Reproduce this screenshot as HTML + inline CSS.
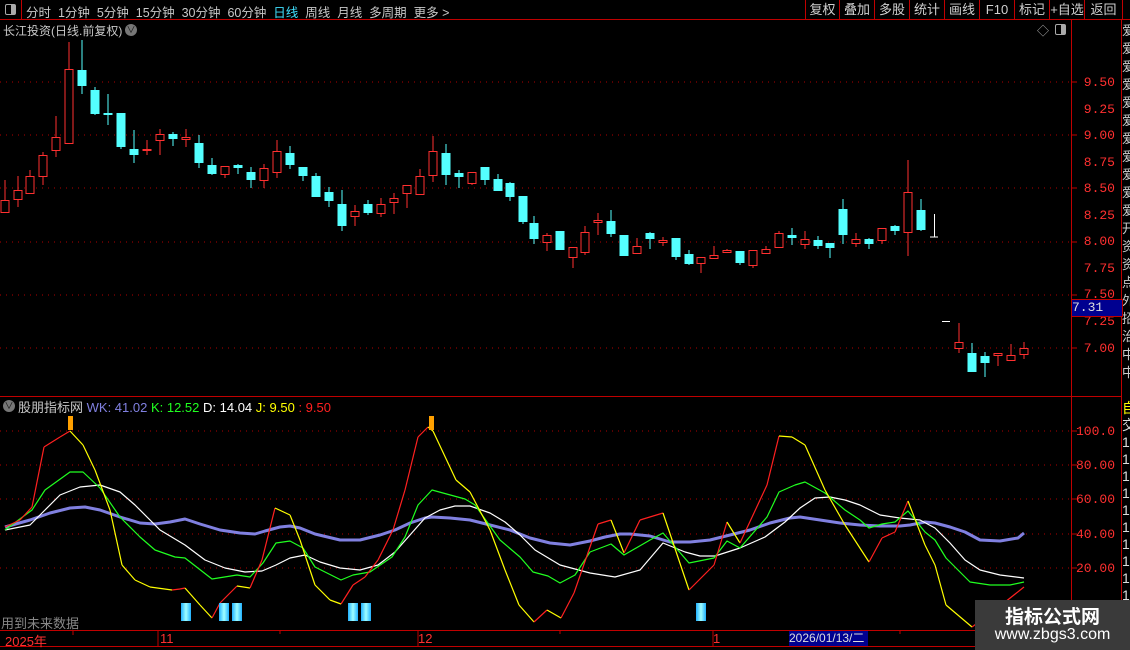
<!DOCTYPE html>
<html><head><meta charset="utf-8"><style>
body{margin:0;background:#000;width:1130px;height:650px;overflow:hidden;position:relative;font-family:"Liberation Sans","Noto Sans CJK SC",sans-serif;}
.a{position:absolute;white-space:nowrap;}
.tb{font-size:12.5px;color:#c8c8c8;top:2px;}
.btn{position:absolute;top:0;height:19px;border-left:1px solid #c00000;color:#d0d0d0;font-size:13px;line-height:19px;text-align:center;}
.pl{position:absolute;right:15px;font-size:13px;color:#ff3030;font-family:"Liberation Mono",monospace;}
</style></head><body>
<div class="a" style="left:0;top:0;width:21px;height:19px;border-right:1px solid #c00000;"></div>
<div class="a" style="left:5px;top:4px;width:9px;height:9px;border:1px solid #aaa;border-radius:2px;"><div style="position:absolute;right:0;top:0;width:4px;height:9px;background:#aaa"></div></div>
<div class="a" style="left:0;top:19px;width:1130px;height:1px;background:#c00000"></div>
<div class="a tb" style="left:26px">分时&nbsp;&nbsp;1分钟&nbsp;&nbsp;5分钟&nbsp;&nbsp;15分钟&nbsp;&nbsp;30分钟&nbsp;&nbsp;60分钟&nbsp;&nbsp;<span style="color:#40e0ff">日线</span>&nbsp;&nbsp;周线&nbsp;&nbsp;月线&nbsp;&nbsp;多周期&nbsp;&nbsp;更多 &gt;</div>
<div class="btn" style="left:805px;width:33px">复权</div>
<div class="btn" style="left:839px;width:34px">叠加</div>
<div class="btn" style="left:874px;width:34px">多股</div>
<div class="btn" style="left:909px;width:34px">统计</div>
<div class="btn" style="left:944px;width:34px">画线</div>
<div class="btn" style="left:979px;width:34px">F10</div>
<div class="btn" style="left:1014px;width:34px">标记</div>
<div class="btn" style="left:1049px;width:34px">+自选</div>
<div class="btn" style="left:1084px;width:37px;border-right:1px solid #c00000">返回</div>
<div class="a" style="left:3px;top:22px;font-size:12px;color:#c8c8c8">长江投资(日线.前复权)</div>
<div class="a" style="left:125px;top:24px;width:12px;height:12px;border-radius:6px;background:#777;color:#111;font-size:9px;line-height:12px;text-align:center">∨</div>
<div class="a" style="left:1037px;top:22px;font-size:12px;color:#aaa">◇</div>
<div class="a" style="left:1055px;top:24px;width:9px;height:9px;border:1px solid #aaa;border-radius:2px;"><div style="position:absolute;right:0;top:0;width:4px;height:9px;background:#aaa"></div></div>
<div class="a" style="left:1071px;top:20px;width:1px;height:630px;background:#c00000"></div>
<div class="a" style="left:1121px;top:20px;width:1px;height:630px;background:#c00000"></div>
<div class="a" style="left:0;top:396px;width:1122px;height:1px;background:#c00000"></div>
<div class="a" style="left:0;top:630px;width:1130px;height:1px;background:#c00000"></div>
<div class="a" style="left:0;top:646px;width:1130px;height:1px;background:#c00000"></div>
<div class="a" style="left:1122px;top:22px;width:8px;height:370px;overflow:hidden;color:#ccc;font-size:13px;line-height:18px;">爱<br>爱<br>爱<br>爱<br>爱<br>爱<br>爱<br>爱<br>爱<br>爱<br>爱<br>开<br>资<br>资<br>点<br>外<br>招<br>治<br>中<br>中</div>
<div class="a" style="left:1122px;top:400px;width:8px;height:220px;overflow:hidden;color:#ddd;font-size:14px;line-height:17px;"><span style="color:#ff0">自</span><br>交<br>1<br>1<br>1<br>1<br>1<br>1<br>1<br>1<br>1<br>1<br>1</div>
<div class="pl" style="top:75px">9.50</div>
<div class="pl" style="top:102px">9.25</div>
<div class="pl" style="top:128px">9.00</div>
<div class="pl" style="top:155px">8.75</div>
<div class="pl" style="top:181px">8.50</div>
<div class="pl" style="top:208px">8.25</div>
<div class="pl" style="top:234px">8.00</div>
<div class="pl" style="top:261px">7.75</div>
<div class="pl" style="top:287px">7.50</div>
<div class="pl" style="top:314px">7.25</div>
<div class="pl" style="top:341px">7.00</div>
<div class="a" style="left:1071px;top:299px;width:50px;height:16px;background:#000090;border:1px solid #c00000;color:#ddd;font-size:13px;line-height:16px;font-family:'Liberation Mono',monospace;">7.31</div>
<div class="pl" style="top:424px">100.0</div>
<div class="pl" style="top:458px">80.00</div>
<div class="pl" style="top:492px">60.00</div>
<div class="pl" style="top:527px">40.00</div>
<div class="pl" style="top:561px">20.00</div>
<div class="a" style="left:3px;top:400px;width:12px;height:12px;border-radius:6px;background:#777;color:#111;font-size:9px;line-height:12px;text-align:center">∨</div>
<div class="a" style="left:18px;top:397px;font-size:13px;color:#c8c8c8">股朋指标网 <span style="color:#8080e0">WK: 41.02</span> <span style="color:#20ff20">K: 12.52</span> <span style="color:#fff">D: 14.04</span> <span style="color:#ffff00">J: 9.50</span> <span style="color:#ff2020">: 9.50</span></div>
<div class="a" style="left:1px;top:613px;font-size:13px;color:#888">用到未来数据</div>
<div class="a" style="left:5px;top:631px;font-size:13px;color:#ff3030">2025年</div>
<div class="a" style="left:160px;top:631px;font-size:13px;color:#ff3030">11</div>
<div class="a" style="left:418px;top:631px;font-size:13px;color:#ff3030">12</div>
<div class="a" style="left:713px;top:631px;font-size:13px;color:#ff3030">1</div>
<div class="a" style="left:789px;top:631px;width:79px;height:15px;background:#000090;color:#ddd;font-size:12px;line-height:15px">2026/01/13/二</div>
<svg class="a" style="left:0;top:0" width="1130" height="650">
<g stroke="#b00000" stroke-dasharray="1 5">
<line x1="0" y1="82" x2="1071" y2="82"/><line x1="0" y1="135" x2="1071" y2="135"/><line x1="0" y1="188" x2="1071" y2="188"/><line x1="0" y1="242" x2="1071" y2="242"/><line x1="0" y1="295" x2="1071" y2="295"/><line x1="0" y1="348" x2="1071" y2="348"/>
<line x1="0" y1="431" x2="1071" y2="431"/><line x1="0" y1="465" x2="1071" y2="465"/><line x1="0" y1="499" x2="1071" y2="499"/><line x1="0" y1="534" x2="1071" y2="534"/><line x1="0" y1="568" x2="1071" y2="568"/>
</g>
<g stroke="#c00000">
<line x1="1071" y1="82" x2="1077" y2="82"/><line x1="1071" y1="135" x2="1077" y2="135"/><line x1="1071" y1="188" x2="1077" y2="188"/><line x1="1071" y1="242" x2="1077" y2="242"/><line x1="1071" y1="295" x2="1077" y2="295"/><line x1="1071" y1="348" x2="1077" y2="348"/>
<line x1="1071" y1="431" x2="1077" y2="431"/><line x1="1071" y1="465" x2="1077" y2="465"/><line x1="1071" y1="499" x2="1077" y2="499"/><line x1="1071" y1="534" x2="1077" y2="534"/><line x1="1071" y1="568" x2="1077" y2="568"/>
<line x1="73" y1="630" x2="73" y2="635"/><line x1="158" y1="630" x2="158" y2="646"/><line x1="418" y1="630" x2="418" y2="646"/><line x1="713" y1="630" x2="713" y2="646"/><line x1="280" y1="630" x2="280" y2="634"/><line x1="560" y1="630" x2="560" y2="634"/><line x1="900" y1="630" x2="900" y2="634"/>
</g>
<g id="cd"></g>
<g fill="none" stroke-width="1.2" stroke-linejoin="round">
<polyline stroke="#8080e0" stroke-width="3" points="5,527 30,520 50,513 70,508 85,507 100,510 120,517 140,523 155,524 170,522 185,519 200,524 220,530 240,533 255,534 265,531 280,527 290,526 300,528 315,534 340,540 360,540 380,535 395,530 410,523 425,518 432,517 450,518 470,520 490,525 510,530 530,538 550,543 570,545 590,541 605,537 620,534 630,534 650,536 670,542 690,542 710,540 730,535 750,530 770,523 790,518 800,517 820,520 840,523 860,525 880,526 900,526 910,525 925,522 935,523 950,527 965,532 980,540 1000,541 1018,538 1024,533"/>
<polyline stroke="#ffffff" points="5,530 30,525 45,510 60,495 80,487 100,485 120,492 135,505 160,530 185,545 205,560 225,568 245,572 262,571 276,565 290,558 305,555 320,562 340,568 360,570 378,565 395,552 410,535 425,518 440,510 455,506 470,506 490,513 505,522 520,535 535,550 560,565 590,573 615,577 640,570 663,543 685,552 700,556 715,556 740,548 765,537 785,522 800,508 815,498 830,497 845,500 860,505 880,515 900,518 920,520 935,528 950,543 965,560 980,570 1000,575 1024,578"/>
<polyline stroke="#20ff20" points="5,530 32,510 45,490 70,472 83,472 100,488 120,517 140,537 155,550 175,557 185,558 212,579 237,575 250,577 263,563 276,543 290,541 303,548 315,567 341,580 353,575 370,572 392,557 405,537 418,505 432,490 465,499 475,505 500,540 520,557 533,572 548,576 560,583 575,575 590,552 611,544 624,555 650,540 663,533 689,563 714,558 727,541 740,548 767,517 779,492 795,485 805,482 825,493 845,510 860,520 869,528 882,524 895,522 908,511 925,532 935,540 946,558 970,582 990,585 1010,585 1024,582"/>
</g>
<g id="jl" fill="none" stroke-width="1.2"></g>
<rect x="68" y="416" width="5" height="14" fill="#ffa000"/>
<rect x="429" y="416" width="5" height="14" fill="#ffa000"/>
<defs><linearGradient id="cg" x1="0" x2="1"><stop offset="0" stop-color="#20b0ff"/><stop offset="0.5" stop-color="#a0ffff"/><stop offset="1" stop-color="#20b0ff"/></linearGradient></defs>
<g fill="url(#cg)">
<rect x="181" y="603" width="10" height="18"/><rect x="219" y="603" width="10" height="18"/><rect x="232" y="603" width="10" height="18"/><rect x="348" y="603" width="10" height="18"/><rect x="361" y="603" width="10" height="18"/><rect x="696" y="603" width="10" height="18"/>
</g>
</svg>
<div class="a" style="left:975px;top:600px;width:155px;height:50px;background:#3a3a3a;"></div>
<div class="a" style="left:975px;top:602px;width:155px;text-align:center;font-size:19px;font-weight:bold;color:#fff">指标公式网</div>
<div class="a" style="left:975px;top:626px;width:155px;text-align:center;font-size:16px;color:#fff">www.zbgs3.com</div>
<script>
var d=[[5,180,200,213,213,'r'],[18,176,190,200,207,'r'],[30,170,176,194,194,'r'],[43,152,155,177,185,'r'],[56,116,137,151,157,'r'],[69,42,69,144,144,'r'],[82,40,70,86,94,'c'],[95,87,90,114,115,'c'],[108,94,113,115,125,'c'],[121,113,113,147,149,'c'],[134,130,149,155,163,'c'],[147,140,149,151,155,'rf'],[160,129,134,141,155,'r'],[173,132,134,139,146,'c'],[186,129,137,140,147,'r'],[199,135,143,163,168,'c'],[212,158,165,174,175,'c'],[225,166,166,175,178,'r'],[238,164,165,168,174,'c'],[251,167,172,180,188,'c'],[264,164,168,181,188,'r'],[277,140,151,173,178,'r'],[290,146,153,165,169,'c'],[303,167,167,176,181,'c'],[316,173,176,197,197,'c'],[329,187,192,201,207,'c'],[342,190,204,226,231,'c'],[355,205,211,217,226,'r'],[368,200,204,213,215,'c'],[381,198,204,214,217,'r'],[394,193,198,203,214,'r'],[407,185,185,194,208,'r'],[420,169,176,195,195,'r'],[433,136,151,176,182,'r'],[446,144,153,175,185,'c'],[459,170,173,177,188,'c'],[472,172,172,184,185,'r'],[485,167,167,180,185,'c'],[498,174,179,191,191,'c'],[510,182,183,197,201,'c'],[523,196,196,222,224,'c'],[534,216,223,239,244,'c'],[547,233,235,243,251,'r'],[560,231,231,250,250,'c'],[573,247,247,258,268,'r'],[585,226,232,253,255,'r'],[598,213,220,223,235,'r'],[611,210,221,234,237,'c'],[624,235,235,256,256,'c'],[637,238,246,254,254,'r'],[650,232,233,239,249,'c'],[663,237,240,243,246,'r'],[676,238,238,257,260,'c'],[689,250,254,264,265,'c'],[701,257,257,264,273,'r'],[714,246,255,259,259,'r'],[727,249,250,253,253,'r'],[740,251,251,263,265,'c'],[753,250,250,266,268,'r'],[766,246,249,254,254,'r'],[779,231,233,248,248,'r'],[792,228,235,238,245,'c'],[805,231,239,245,249,'r'],[818,236,240,246,249,'c'],[830,243,243,248,258,'c'],[843,199,209,235,244,'c'],[856,233,239,244,247,'r'],[869,238,239,244,249,'c'],[882,228,228,241,244,'r'],[895,225,226,231,235,'c'],[908,160,192,233,256,'r'],[921,199,210,230,231,'c'],[959,323,342,349,353,'r'],[972,343,353,372,372,'c'],[985,352,356,363,377,'c'],[998,353,353,356,366,'r'],[1011,344,355,361,361,'r'],[1024,342,348,355,359,'r']];
var s='';d.forEach(function(c){var x=c[0],col=(c[5]=='c')?'#54ffff':'#ff3030';
s+='<line x1="'+x+'" y1="'+c[1]+'" x2="'+x+'" y2="'+c[4]+'" stroke="'+col+'"/>';
var h=Math.max(c[3]-c[2],1);
if(c[5]=='c')s+='<rect x="'+(x-4.5)+'" y="'+c[2]+'" width="9" height="'+h+'" fill="#54ffff"/>';
else if(c[5]=='rf')s+='<rect x="'+(x-4.5)+'" y="'+c[2]+'" width="9" height="'+h+'" fill="#ff3030"/>';
else s+='<rect x="'+(x-4)+'" y="'+(c[2]+.5)+'" width="8" height="'+Math.max(h-1,1)+'" fill="#000" stroke="#ff3030"/>';});
s+='<line x1="934.5" y1="214" x2="934.5" y2="237" stroke="#fff"/><line x1="930" y1="237" x2="938" y2="237" stroke="#fff"/><line x1="942" y1="321.5" x2="950" y2="321.5" stroke="#fff"/>';
document.getElementById('cd').innerHTML=s;
var J=[[5,527],[20,520],[32,507],[44,447],[60,437],[70,431],[83,445],[95,470],[110,510],[122,565],[135,580],[150,587],[172,590],[180,589],[185,588],[200,605],[212,618],[220,603],[237,586],[250,588],[262,560],[275,508],[290,515],[300,540],[315,585],[330,600],[341,604],[353,585],[365,577],[378,560],[393,530],[405,490],[418,437],[428,427],[433,431],[456,480],[470,492],[490,530],[505,570],[519,605],[534,622],[547,610],[561,618],[574,593],[598,524],[611,520],[624,553],[640,520],[663,513],[689,590],[714,565],[727,522],[740,543],[767,485],[779,436],[792,437],[805,445],[825,490],[845,525],[869,562],[882,538],[895,532],[908,501],[925,545],[935,565],[946,605],[972,627],[995,610],[1024,587]];
var t='';for(var i=1;i<J.length;i++){var a=J[i-1],b=J[i];t+='<line x1="'+a[0]+'" y1="'+a[1]+'" x2="'+b[0]+'" y2="'+b[1]+'" stroke="'+(b[1]<a[1]?'#ff2020':'#ffff00')+'"/>';}
document.getElementById('jl').innerHTML=t;
</script>
</body></html>
